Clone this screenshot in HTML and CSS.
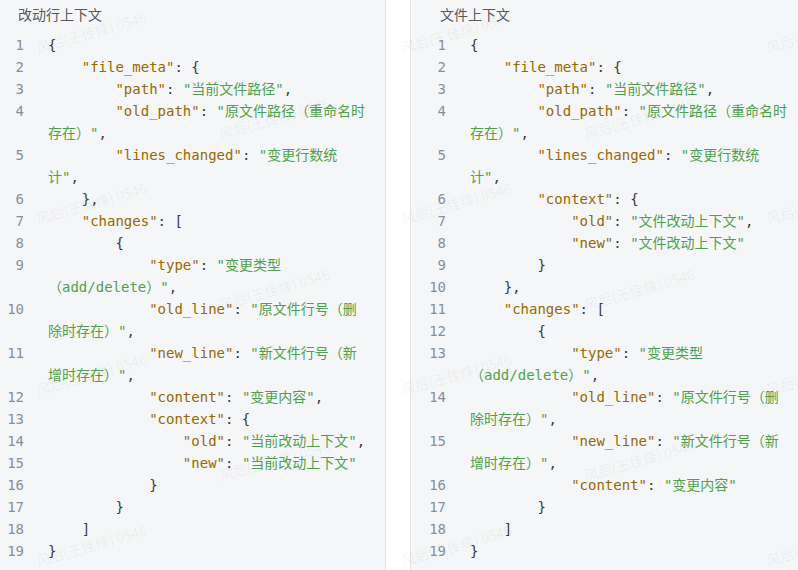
FILE: index.html
```html
<!DOCTYPE html>
<html lang="zh-CN">
<head>
<meta charset="utf-8">
<title>上下文对比</title>
<link rel="stylesheet" href="styles.css">
</head>
<body>
<div class="split">
  <section class="panel">
    <div class="title">改动行上下文</div>
    <div class="code">
      <div class="row"><span class="ln">1</span><span class="tx"><span class="p">{</span></span></div>
      <div class="row"><span class="ln">2</span><span class="tx">    <span class="k">"file_meta"</span><span class="p">: {</span></span></div>
      <div class="row"><span class="ln">3</span><span class="tx">        <span class="k">"path"</span><span class="p">: </span><span class="s">"当前文件路径"</span><span class="p">,</span></span></div>
      <div class="row"><span class="ln">4</span><span class="tx">        <span class="k">"old_path"</span><span class="p">: </span><span class="s">"原文件路径（重命名时存在）"</span><span class="p">,</span></span></div>
      <div class="row"><span class="ln">5</span><span class="tx">        <span class="k">"lines_changed"</span><span class="p">: </span><span class="s">"变更行数统计"</span><span class="p">,</span></span></div>
      <div class="row"><span class="ln">6</span><span class="tx"><span class="p">    },</span></span></div>
      <div class="row"><span class="ln">7</span><span class="tx">    <span class="k">"changes"</span><span class="p">: [</span></span></div>
      <div class="row"><span class="ln">8</span><span class="tx"><span class="p">        {</span></span></div>
      <div class="row"><span class="ln">9</span><span class="tx">            <span class="k">"type"</span><span class="p">: </span><span class="s">"变更类型（add/delete）"</span><span class="p">,</span></span></div>
      <div class="row"><span class="ln">10</span><span class="tx">            <span class="k">"old_line"</span><span class="p">: </span><span class="s">"原文件行号（删除时存在）"</span><span class="p">,</span></span></div>
      <div class="row"><span class="ln">11</span><span class="tx">            <span class="k">"new_line"</span><span class="p">: </span><span class="s">"新文件行号（新增时存在）"</span><span class="p">,</span></span></div>
      <div class="row"><span class="ln">12</span><span class="tx">            <span class="k">"content"</span><span class="p">: </span><span class="s">"变更内容"</span><span class="p">,</span></span></div>
      <div class="row"><span class="ln">13</span><span class="tx">            <span class="k">"context"</span><span class="p">: {</span></span></div>
      <div class="row"><span class="ln">14</span><span class="tx">                <span class="k">"old"</span><span class="p">: </span><span class="s">"当前改动上下文"</span><span class="p">,</span></span></div>
      <div class="row"><span class="ln">15</span><span class="tx">                <span class="k">"new"</span><span class="p">: </span><span class="s">"当前改动上下文"</span></span></div>
      <div class="row"><span class="ln">16</span><span class="tx"><span class="p">            }</span></span></div>
      <div class="row"><span class="ln">17</span><span class="tx"><span class="p">        }</span></span></div>
      <div class="row"><span class="ln">18</span><span class="tx"><span class="p">    ]</span></span></div>
      <div class="row"><span class="ln">19</span><span class="tx"><span class="p">}</span></span></div>
    </div>
  </section>
  <section class="panel">
    <div class="title">文件上下文</div>
    <div class="code">
      <div class="row"><span class="ln">1</span><span class="tx"><span class="p">{</span></span></div>
      <div class="row"><span class="ln">2</span><span class="tx">    <span class="k">"file_meta"</span><span class="p">: {</span></span></div>
      <div class="row"><span class="ln">3</span><span class="tx">        <span class="k">"path"</span><span class="p">: </span><span class="s">"当前文件路径"</span><span class="p">,</span></span></div>
      <div class="row"><span class="ln">4</span><span class="tx">        <span class="k">"old_path"</span><span class="p">: </span><span class="s">"原文件路径（重命名时存在）"</span><span class="p">,</span></span></div>
      <div class="row"><span class="ln">5</span><span class="tx">        <span class="k">"lines_changed"</span><span class="p">: </span><span class="s">"变更行数统计"</span><span class="p">,</span></span></div>
      <div class="row"><span class="ln">6</span><span class="tx">        <span class="k">"context"</span><span class="p">: {</span></span></div>
      <div class="row"><span class="ln">7</span><span class="tx">            <span class="k">"old"</span><span class="p">: </span><span class="s">"文件改动上下文"</span><span class="p">,</span></span></div>
      <div class="row"><span class="ln">8</span><span class="tx">            <span class="k">"new"</span><span class="p">: </span><span class="s">"文件改动上下文"</span></span></div>
      <div class="row"><span class="ln">9</span><span class="tx"><span class="p">        }</span></span></div>
      <div class="row"><span class="ln">10</span><span class="tx"><span class="p">    },</span></span></div>
      <div class="row"><span class="ln">11</span><span class="tx">    <span class="k">"changes"</span><span class="p">: [</span></span></div>
      <div class="row"><span class="ln">12</span><span class="tx"><span class="p">        {</span></span></div>
      <div class="row"><span class="ln">13</span><span class="tx">            <span class="k">"type"</span><span class="p">: </span><span class="s">"变更类型（add/delete）"</span><span class="p">,</span></span></div>
      <div class="row"><span class="ln">14</span><span class="tx">            <span class="k">"old_line"</span><span class="p">: </span><span class="s">"原文件行号（删除时存在）"</span><span class="p">,</span></span></div>
      <div class="row"><span class="ln">15</span><span class="tx">            <span class="k">"new_line"</span><span class="p">: </span><span class="s">"新文件行号（新增时存在）"</span><span class="p">,</span></span></div>
      <div class="row"><span class="ln">16</span><span class="tx">            <span class="k">"content"</span><span class="p">: </span><span class="s">"变更内容"</span></span></div>
      <div class="row"><span class="ln">17</span><span class="tx"><span class="p">        }</span></span></div>
      <div class="row"><span class="ln">18</span><span class="tx"><span class="p">    ]</span></span></div>
      <div class="row"><span class="ln">19</span><span class="tx"><span class="p">}</span></span></div>
    </div>
  </section>
</div>
<div class="watermark" aria-hidden="true">
  <span class="wm">风后(王佳烽) 0546</span><span></span><span class="wm">风后(王佳烽) 0546</span><span></span><span class="wm">风后(王佳烽) 0546</span>
  <span></span><span class="wm">风后(王佳烽) 0546</span><span></span><span class="wm">风后(王佳烽) 0546</span><span></span>
  <span class="wm">风后(王佳烽) 0546</span><span></span><span class="wm">风后(王佳烽) 0546</span><span></span><span class="wm">风后(王佳烽) 0546</span>
  <span></span><span class="wm">风后(王佳烽) 0546</span><span></span><span class="wm">风后(王佳烽) 0546</span><span></span>
  <span class="wm">风后(王佳烽) 0546</span><span></span><span class="wm">风后(王佳烽) 0546</span><span></span><span class="wm">风后(王佳烽) 0546</span>
  <span></span><span class="wm">风后(王佳烽) 0546</span><span></span><span class="wm">风后(王佳烽) 0546</span><span></span>
  <span class="wm">风后(王佳烽) 0546</span><span></span><span class="wm">风后(王佳烽) 0546</span><span></span><span class="wm">风后(王佳烽) 0546</span>
</div>
</body>
</html>
```

FILE: styles.css
```css
html, body {
  margin: 0;
  padding: 0;
  background: #ffffff;
}
body {
  position: relative;
  width: 798px;
  height: 570px;
  overflow: hidden;
}
.split {
  display: flex;
  gap: 24px;
  margin-left: -12px;
  height: 570px;
}
.panel {
  flex: 0 0 398px;
  box-sizing: border-box;
  background: #f5f6f7;
  border-left: 1px solid #e2e4e7;
  border-right: 1px solid #e2e4e7;
  padding: 3px 18.5px 0 11px;
  overflow: hidden;
}
.title {
  font-family: "Noto Sans CJK SC", "Noto Sans", sans-serif;
  font-size: 14px;
  line-height: 22px;
  color: #595959;
  padding-left: 18px;
  margin-bottom: 9px;
}
.code {
  font-family: "DejaVu Sans Mono", "Noto Sans CJK SC", monospace;
  font-size: 14px;
  line-height: 22px;
  color: #383a42;
}
.row {
  display: grid;
  grid-template-columns: 24px 1fr;
  column-gap: 24px;
  align-items: start;
}
.ln {
  text-align: right;
  color: #86909c;
  white-space: nowrap;
}
.tx {
  white-space: pre-wrap;
  word-break: normal;
  overflow-wrap: normal;
}
.k { color: #986801; }
.s { color: #50a14f; }
.p { color: #383a42; }
.watermark {
  position: absolute;
  top: -11px;
  left: 0;
  display: grid;
  grid-template-columns: repeat(5, 182.5px);
  grid-auto-rows: 85.5px;
  pointer-events: none;
}
.watermark > span {
  display: flex;
  align-items: center;
  justify-content: center;
}
.wm {
  font-family: "Noto Sans CJK SC", "Noto Sans", sans-serif;
  font-size: 14px;
  color: rgba(0, 0, 0, 0.06);
  white-space: nowrap;
  transform: rotate(-16deg);
}
```
